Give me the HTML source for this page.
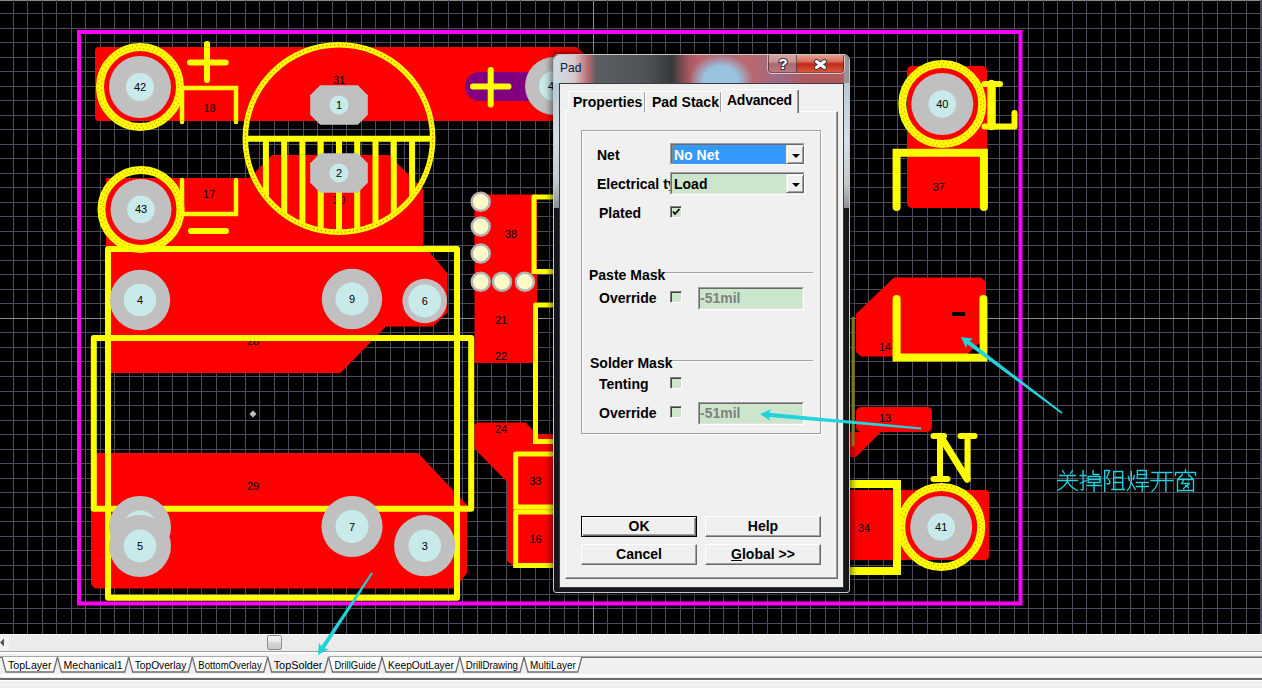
<!DOCTYPE html>
<html><head><meta charset="utf-8"><style>
html,body{margin:0;padding:0;width:1262px;height:688px;overflow:hidden;background:#f0f0f0;font-family:"Liberation Sans",sans-serif;}
svg{position:absolute;left:0;top:0;}

.dlg{position:absolute;left:553px;top:54px;width:297px;height:539px;border-radius:6px 6px 3px 3px;background:#14181c;box-shadow:0 0 7px 2px rgba(0,0,0,.55);box-sizing:border-box;border:1px solid #c8c8c8;overflow:hidden}
.title{position:absolute;left:0;top:0;width:297px;height:28px;
 background:radial-gradient(ellipse 32px 27px at 167px 26px,#98c2e0 0%,#98c2e0 55%,rgba(152,194,224,0) 100%),
 linear-gradient(90deg,#cfdde6 0px,#d7c8cc 20px,#b86a70 34px,#5a5e62 42px,#505458 90px,#36393c 118px,#aa5860 135px,#b8636b 145px,#b86870 200px,#9a6a88 225px,#b05a60 250px,#b05a60 289px,#9a9a9a 291px,#8a8a8a 297px)}
.side{position:absolute;top:28px;width:6px;height:125px;background:linear-gradient(180deg,#b8c8d6,#d4e0ea 45%,#c0c8cc 80%,#8a9096 100%)}
.client{position:absolute;left:5px;top:28px;width:285px;height:505px;background:#f0f0f0;border:1px solid #3c3c3c;box-sizing:border-box}
.tx{position:absolute;font:bold 14px "Liberation Sans",sans-serif;color:#000;white-space:nowrap;line-height:13px}
.tab{position:absolute;background:#f0f0f0;border-left:1px solid #fff;border-top:1px solid #fff;border-right:1px solid #696969;box-shadow:inset -1px 0 0 #a0a0a0;box-sizing:border-box;border-radius:2px 2px 0 0}
.panel{position:absolute;left:565px;top:111px;width:273px;height:468px;border-left:1px solid #fff;border-top:1px solid #fff;border-right:1px solid #696969;border-bottom:1px solid #696969;box-sizing:border-box;box-shadow:inset -1px -1px 0 #a0a0a0}
.grp{position:absolute;left:581px;top:130px;width:240px;height:304px;border:1px solid #a0a0a0;box-shadow:1px 1px 0 #fff, inset 1px 1px 0 #fff;box-sizing:border-box}
.sunk{position:absolute;box-sizing:border-box;border-left:1px solid #a0a0a0;border-top:1px solid #a0a0a0;border-right:1px solid #fff;border-bottom:1px solid #fff}
.sunk2{position:absolute;inset:0;border-left:1px solid #696969;border-top:1px solid #696969;border-right:1px solid #e3e3e3;border-bottom:1px solid #e3e3e3}
.btn{position:absolute;box-sizing:border-box;background:#f0f0f0;border-left:1px solid #fff;border-top:1px solid #fff;border-right:1px solid #696969;border-bottom:1px solid #696969;box-shadow:inset -1px -1px 0 #a0a0a0;text-align:center;font:bold 14px "Liberation Sans",sans-serif;line-height:19px}
.chk{position:absolute;width:12px;height:12px;box-sizing:border-box;background:#cbe6cb;border-left:1px solid #808080;border-top:1px solid #808080;border-right:1px solid #fff;border-bottom:1px solid #fff;box-shadow:inset 1px 1px 0 #404040}
.ddb{position:absolute;box-sizing:border-box;background:#f0f0f0;border-left:1px solid #f0f0f0;border-top:1px solid #f0f0f0;border-right:1px solid #696969;border-bottom:1px solid #696969;box-shadow:inset 1px 1px 0 #fff, inset -1px -1px 0 #a0a0a0}
.tri{position:absolute;left:5px;top:8px;width:0;height:0;border-left:4px solid transparent;border-right:4px solid transparent;border-top:4px solid #000}

</style></head><body>
<svg width="1262" height="688" viewBox="0 0 1262 688" font-family="Liberation Sans, sans-serif"><defs><linearGradient id="thumb" x1="0" y1="0" x2="0" y2="1"><stop offset="0" stop-color="#f4f4f4"/><stop offset="0.45" stop-color="#e8e8e8"/><stop offset="0.5" stop-color="#d6d6da"/><stop offset="1" stop-color="#c8c8cc"/></linearGradient></defs>
<rect x="0" y="0" width="1262" height="634" fill="#000"/>
<rect x="0" y="0" width="1262" height="1" fill="#8a8a8a"/>
<g fill="#4e4c5c" shape-rendering="crispEdges"><rect x="13" y="0" width="1" height="634"/><rect x="27" y="0" width="1" height="634"/><rect x="42" y="0" width="1" height="634"/><rect x="56" y="0" width="1" height="634"/><rect x="71" y="0" width="1" height="634"/><rect x="85" y="0" width="1" height="634"/><rect x="100" y="0" width="1" height="634"/><rect x="114" y="0" width="1" height="634"/><rect x="129" y="0" width="1" height="634"/><rect x="143" y="0" width="1" height="634"/><rect x="158" y="0" width="1" height="634"/><rect x="172" y="0" width="1" height="634"/><rect x="187" y="0" width="1" height="634"/><rect x="201" y="0" width="1" height="634"/><rect x="216" y="0" width="1" height="634"/><rect x="230" y="0" width="1" height="634"/><rect x="245" y="0" width="1" height="634"/><rect x="259" y="0" width="1" height="634"/><rect x="274" y="0" width="1" height="634"/><rect x="288" y="0" width="1" height="634"/><rect x="303" y="0" width="1" height="634"/><rect x="317" y="0" width="1" height="634"/><rect x="332" y="0" width="1" height="634"/><rect x="346" y="0" width="1" height="634"/><rect x="361" y="0" width="1" height="634"/><rect x="375" y="0" width="1" height="634"/><rect x="390" y="0" width="1" height="634"/><rect x="404" y="0" width="1" height="634"/><rect x="419" y="0" width="1" height="634"/><rect x="433" y="0" width="1" height="634"/><rect x="448" y="0" width="1" height="634"/><rect x="462" y="0" width="1" height="634"/><rect x="477" y="0" width="1" height="634"/><rect x="491" y="0" width="1" height="634"/><rect x="506" y="0" width="1" height="634"/><rect x="520" y="0" width="1" height="634"/><rect x="535" y="0" width="1" height="634"/><rect x="549" y="0" width="1" height="634"/><rect x="564" y="0" width="1" height="634"/><rect x="578" y="0" width="1" height="634"/><rect x="593" y="0" width="1" height="634"/><rect x="607" y="0" width="1" height="634"/><rect x="622" y="0" width="1" height="634"/><rect x="636" y="0" width="1" height="634"/><rect x="651" y="0" width="1" height="634"/><rect x="665" y="0" width="1" height="634"/><rect x="680" y="0" width="1" height="634"/><rect x="694" y="0" width="1" height="634"/><rect x="709" y="0" width="1" height="634"/><rect x="723" y="0" width="1" height="634"/><rect x="738" y="0" width="1" height="634"/><rect x="752" y="0" width="1" height="634"/><rect x="767" y="0" width="1" height="634"/><rect x="781" y="0" width="1" height="634"/><rect x="796" y="0" width="1" height="634"/><rect x="810" y="0" width="1" height="634"/><rect x="825" y="0" width="1" height="634"/><rect x="839" y="0" width="1" height="634"/><rect x="854" y="0" width="1" height="634"/><rect x="868" y="0" width="1" height="634"/><rect x="883" y="0" width="1" height="634"/><rect x="897" y="0" width="1" height="634"/><rect x="912" y="0" width="1" height="634"/><rect x="927" y="0" width="1" height="634"/><rect x="941" y="0" width="1" height="634"/><rect x="956" y="0" width="1" height="634"/><rect x="970" y="0" width="1" height="634"/><rect x="985" y="0" width="1" height="634"/><rect x="999" y="0" width="1" height="634"/><rect x="1014" y="0" width="1" height="634"/><rect x="1028" y="0" width="1" height="634"/><rect x="1043" y="0" width="1" height="634"/><rect x="1057" y="0" width="1" height="634"/><rect x="1072" y="0" width="1" height="634"/><rect x="1086" y="0" width="1" height="634"/><rect x="1101" y="0" width="1" height="634"/><rect x="1115" y="0" width="1" height="634"/><rect x="1130" y="0" width="1" height="634"/><rect x="1144" y="0" width="1" height="634"/><rect x="1159" y="0" width="1" height="634"/><rect x="1173" y="0" width="1" height="634"/><rect x="1188" y="0" width="1" height="634"/><rect x="1202" y="0" width="1" height="634"/><rect x="1217" y="0" width="1" height="634"/><rect x="1231" y="0" width="1" height="634"/><rect x="1246" y="0" width="1" height="634"/><rect x="1260" y="0" width="1" height="634"/><rect x="1261" y="0" width="1" height="634"/><rect x="0" y="13" width="1262" height="1"/><rect x="0" y="28" width="1262" height="1"/><rect x="0" y="42" width="1262" height="1"/><rect x="0" y="57" width="1262" height="1"/><rect x="0" y="71" width="1262" height="1"/><rect x="0" y="86" width="1262" height="1"/><rect x="0" y="100" width="1262" height="1"/><rect x="0" y="115" width="1262" height="1"/><rect x="0" y="129" width="1262" height="1"/><rect x="0" y="144" width="1262" height="1"/><rect x="0" y="158" width="1262" height="1"/><rect x="0" y="173" width="1262" height="1"/><rect x="0" y="187" width="1262" height="1"/><rect x="0" y="202" width="1262" height="1"/><rect x="0" y="216" width="1262" height="1"/><rect x="0" y="231" width="1262" height="1"/><rect x="0" y="245" width="1262" height="1"/><rect x="0" y="260" width="1262" height="1"/><rect x="0" y="274" width="1262" height="1"/><rect x="0" y="289" width="1262" height="1"/><rect x="0" y="303" width="1262" height="1"/><rect x="0" y="318" width="1262" height="1"/><rect x="0" y="332" width="1262" height="1"/><rect x="0" y="347" width="1262" height="1"/><rect x="0" y="361" width="1262" height="1"/><rect x="0" y="376" width="1262" height="1"/><rect x="0" y="391" width="1262" height="1"/><rect x="0" y="405" width="1262" height="1"/><rect x="0" y="420" width="1262" height="1"/><rect x="0" y="434" width="1262" height="1"/><rect x="0" y="449" width="1262" height="1"/><rect x="0" y="463" width="1262" height="1"/><rect x="0" y="478" width="1262" height="1"/><rect x="0" y="492" width="1262" height="1"/><rect x="0" y="507" width="1262" height="1"/><rect x="0" y="521" width="1262" height="1"/><rect x="0" y="536" width="1262" height="1"/><rect x="0" y="550" width="1262" height="1"/><rect x="0" y="565" width="1262" height="1"/><rect x="0" y="579" width="1262" height="1"/><rect x="0" y="594" width="1262" height="1"/><rect x="0" y="608" width="1262" height="1"/><rect x="0" y="623" width="1262" height="1"/></g><g fill="#8e8e8e" shape-rendering="crispEdges"><rect x="593" y="1" width="1" height="633"/><rect x="0" y="318" width="1262" height="1"/></g>
<path d="M79,32 H1020.5 V603.5 H79 Z" fill="none" stroke="#ff00ff" stroke-width="4"/><rect x="95" y="47" width="205" height="74" rx="4" fill="#ff0000"/><polygon fill="#ff0000"  points="290,47 576,47 578,48 585,55 585,121 290,121"/><polygon fill="#ff0000"  points="106,178 249.5,178 272,155 389,155 423.5,189.5 423.5,250 106,250"/><rect x="106" y="178" width="54" height="62" rx="5" fill="#ff0000"/><polygon fill="#ff0000"  points="106,249 427,249 447.5,273.5 447.5,312.5 433,326.5 386,326.5 340.5,373 106,373"/><polygon fill="#ff0000"  points="93,453 418,453 467,505 467,573 455,588.5 95,588.5 91,584.5 91,455"/><polygon fill="#ff0000"  points="474.5,194.5 537,194.5 537,363 474.5,363"/><polygon fill="#ff0000"  points="477,422.4 525.6,422.4 537,434.5 560,434.5 560,566.4 514.5,566.4 507,561 507,481.8 474.4,448.4 474.4,425"/><rect x="907" y="66" width="80" height="142" rx="5" fill="#ff0000"/><polygon fill="#ff0000"  points="894,277.5 981,277.5 986,282 986,352 981,356.5 861,356.5 856,352 856,314"/><rect x="856" y="407" width="76" height="25" rx="5" fill="#ff0000"/><polygon fill="#ff0000"  points="840,432 881,432 856,457 840,457"/><rect x="845" y="490" width="144" height="70" rx="4" fill="#ff0000"/><rect x="465" y="72" width="100" height="29" rx="14.5" fill="#800080"/><text x="209.5" y="112.3" font-size="11" text-anchor="middle" fill="#000">18</text><text x="209.2" y="198.2" font-size="11" text-anchor="middle" fill="#000">17</text><text x="339" y="83.6" font-size="11" text-anchor="middle" fill="#000">31</text><text x="339" y="203.5" font-size="11" text-anchor="middle" fill="#000">30</text><text x="253" y="344.7" font-size="11" text-anchor="middle" fill="#000">28</text><text x="253" y="490" font-size="11" text-anchor="middle" fill="#000">29</text><text x="511" y="238" font-size="11" text-anchor="middle" fill="#000">38</text><text x="501" y="324" font-size="11" text-anchor="middle" fill="#000">21</text><text x="501" y="360" font-size="11" text-anchor="middle" fill="#000">22</text><text x="501" y="433.3" font-size="11" text-anchor="middle" fill="#000">24</text><text x="535.5" y="484.5" font-size="11" text-anchor="middle" fill="#000">33</text><text x="535.5" y="542.7" font-size="11" text-anchor="middle" fill="#000">16</text><text x="938.8" y="191" font-size="11" text-anchor="middle" fill="#000">37</text><text x="885" y="351" font-size="11" text-anchor="middle" fill="#000">14</text><text x="885" y="422.4" font-size="11" text-anchor="middle" fill="#000">13</text><text x="864" y="532" font-size="11" text-anchor="middle" fill="#000">34</text><rect x="250.5" y="411.5" width="5" height="5" transform="rotate(45 253 414)" fill="#c0c0c0"/><circle cx="140" cy="87" r="40" fill="none" stroke="#ffff00" stroke-width="8"/><circle cx="140" cy="87" r="38.5" fill="none" stroke="#ff0000" stroke-width="0.9" stroke-dasharray="0.9 3.6" opacity="0.8"/><circle cx="140" cy="87" r="41.5" fill="none" stroke="#ff0000" stroke-width="0.9" stroke-dasharray="0.9 3.6" stroke-dashoffset="2" opacity="0.8"/><circle cx="141" cy="209.4" r="39.5" fill="none" stroke="#ffff00" stroke-width="8"/><circle cx="141" cy="209.4" r="38.0" fill="none" stroke="#ff0000" stroke-width="0.9" stroke-dasharray="0.9 3.6" opacity="0.8"/><circle cx="141" cy="209.4" r="41.0" fill="none" stroke="#ff0000" stroke-width="0.9" stroke-dasharray="0.9 3.6" stroke-dashoffset="2" opacity="0.8"/><circle cx="942.3" cy="104" r="40" fill="none" stroke="#ffff00" stroke-width="8"/><circle cx="942.3" cy="104" r="38.5" fill="none" stroke="#ff0000" stroke-width="0.9" stroke-dasharray="0.9 3.6" opacity="0.8"/><circle cx="942.3" cy="104" r="41.5" fill="none" stroke="#ff0000" stroke-width="0.9" stroke-dasharray="0.9 3.6" stroke-dashoffset="2" opacity="0.8"/><circle cx="941.2" cy="527" r="40" fill="none" stroke="#ffff00" stroke-width="8"/><circle cx="941.2" cy="527" r="38.5" fill="none" stroke="#ff0000" stroke-width="0.9" stroke-dasharray="0.9 3.6" opacity="0.8"/><circle cx="941.2" cy="527" r="41.5" fill="none" stroke="#ff0000" stroke-width="0.9" stroke-dasharray="0.9 3.6" stroke-dashoffset="2" opacity="0.8"/><path d="M207,44 V80 M190,62.4 H225.7" fill="none" stroke="#ffff00" stroke-width="6" stroke-linecap="round" stroke-linejoin="round"/><path d="M182,122 V88 H236 V122" fill="none" stroke="#ffff00" stroke-width="4.5" stroke-linecap="round" stroke-linejoin="miter"/><path d="M182,180 V214 H236 V180" fill="none" stroke="#ffff00" stroke-width="4.5" stroke-linecap="round" stroke-linejoin="miter"/><path d="M191,231 H226" fill="none" stroke="#ffff00" stroke-width="6" stroke-linecap="round" stroke-linejoin="round"/><path d="M473,86.5 H508.5 M490.7,70 V104.5" fill="none" stroke="#ffff00" stroke-width="6" stroke-linecap="round" stroke-linejoin="round"/><clipPath id="cc"><circle cx="339" cy="138.5" r="95"/></clipPath><g clip-path="url(#cc)"><path d="M265.9,139 V240 M284.2,139 V240 M302.4,139 V240 M320.7,139 V240 M339.0,139 V240 M357.2,139 V240 M375.5,139 V240 M393.8,139 V240 M412.1,139 V240  M240,138.8 H440" fill="none" stroke="#ffff00" stroke-width="6" stroke-linecap="round" stroke-linejoin="round"/></g><circle cx="339" cy="138.5" r="93.7" fill="none" stroke="#ffff00" stroke-width="5.5"/><circle cx="339" cy="138.5" r="93.7" fill="none" stroke="#ff0000" stroke-width="1" stroke-dasharray="1 3"/><path d="M108,249 H457 V597.8 H108 Z" fill="none" stroke="#ffff00" stroke-width="6" stroke-linecap="round" stroke-linejoin="round"/><path d="M93.8,338 H471.2 V508.7 H93.8 Z" fill="none" stroke="#ffff00" stroke-width="6" stroke-linecap="round" stroke-linejoin="round"/><path d="M534,197 H552 M534,197 V271.5 H552" fill="none" stroke="#ffff00" stroke-width="5" stroke-linecap="round" stroke-linejoin="miter"/><path d="M535.5,305 H552 M535.5,305 V441.5 H552" fill="none" stroke="#ffff00" stroke-width="5" stroke-linecap="round" stroke-linejoin="miter"/><path d="M515.7,454 H552 M515.7,454 V507 H552" fill="none" stroke="#ffff00" stroke-width="5" stroke-linecap="round" stroke-linejoin="miter"/><path d="M515.7,512 H552 M515.7,512 V565.5 H552" fill="none" stroke="#ffff00" stroke-width="5" stroke-linecap="round" stroke-linejoin="miter"/><path d="M896.6,207 V152.8 H983.9 V207" fill="none" stroke="#ffff00" stroke-width="8" stroke-linecap="round" stroke-linejoin="miter"/><path d="M896.6,299 V357.6 H983.4 V299" fill="none" stroke="#ffff00" stroke-width="8" stroke-linecap="round" stroke-linejoin="miter"/><path d="M850,484 H897 V571 H850" fill="none" stroke="#ffff00" stroke-width="8" stroke-linecap="round" stroke-linejoin="miter"/><rect x="952" y="312" width="13" height="4" fill="#000"/><path d="M853,318 V445" fill="none" stroke="#9a9a18" stroke-width="3" stroke-linecap="round" stroke-linejoin="round"/><polygon points="968,353.5 979.5,353.5 979.5,343" fill="#000"/><path d="M933.5,436 H944 M940,436 V479 M933.5,479 H947.5 M960.5,436 H974.5 M967.5,436 V479.5" fill="none" stroke="#ffff00" stroke-width="6" stroke-linecap="round" stroke-linejoin="round"/><path d="M941,437 L967,479" fill="none" stroke="#ffff00" stroke-width="7" stroke-linecap="round" stroke-linejoin="round"/><path d="M984.5,84 H1000" fill="none" stroke="#ffff00" stroke-width="6" stroke-linecap="round" stroke-linejoin="round"/><path d="M991.5,84 V126" fill="none" stroke="#ffff00" stroke-width="8.5" stroke-linecap="round" stroke-linejoin="round"/><path d="M984.5,126.5 H1014.5 V113" fill="none" stroke="#ffff00" stroke-width="6" stroke-linecap="round" stroke-linejoin="round"/><polygon fill="#c0c0c0" points="320.2,85.2 357.8,85.2 367.8,95.2 367.8,114.8 357.8,124.8 320.2,124.8 310.2,114.8 310.2,95.2"/><circle cx="339" cy="105" r="9.6" fill="#c8eaea"/><text x="339" y="109" font-size="11" text-anchor="middle" fill="#000">1</text><polygon fill="#c0c0c0" points="320.2,153.2 357.8,153.2 367.8,163.2 367.8,182.8 357.8,192.8 320.2,192.8 310.2,182.8 310.2,163.2"/><circle cx="339" cy="173" r="9.6" fill="#c8eaea"/><text x="339" y="177" font-size="11" text-anchor="middle" fill="#000">2</text><circle cx="140" cy="87" r="31" fill="#c0c0c0"/><circle cx="140" cy="87" r="14" fill="#c8eaea"/><text x="140" y="91" font-size="11" text-anchor="middle" fill="#000">42</text><circle cx="141" cy="209.4" r="30.5" fill="#c0c0c0"/><circle cx="141" cy="209.4" r="13.8" fill="#c8eaea"/><text x="141" y="213.4" font-size="11" text-anchor="middle" fill="#000">43</text><circle cx="140" cy="300" r="30.2" fill="#c0c0c0"/><circle cx="140" cy="300" r="16.3" fill="#c8eaea"/><text x="140" y="304" font-size="11" text-anchor="middle" fill="#000">4</text><circle cx="352" cy="299" r="30.2" fill="#c0c0c0"/><circle cx="352" cy="299" r="16.6" fill="#c8eaea"/><text x="352" y="303" font-size="11" text-anchor="middle" fill="#000">9</text><circle cx="424.7" cy="301" r="22.3" fill="#c0c0c0"/><circle cx="424.7" cy="301" r="16.4" fill="#c8eaea"/><text x="424.7" y="305" font-size="11" text-anchor="middle" fill="#000">6</text><circle cx="140" cy="527" r="31" fill="#c0c0c0"/><circle cx="140" cy="527" r="16.5" fill="#c8eaea"/><circle cx="140" cy="546" r="31" fill="#c0c0c0"/><circle cx="140" cy="546" r="16.4" fill="#c8eaea"/><text x="140" y="550" font-size="11" text-anchor="middle" fill="#000">5</text><circle cx="352" cy="526.5" r="30.6" fill="#c0c0c0"/><circle cx="352" cy="526.5" r="16.5" fill="#c8eaea"/><text x="352" y="530.5" font-size="11" text-anchor="middle" fill="#000">7</text><circle cx="424.7" cy="545.7" r="30.6" fill="#c0c0c0"/><circle cx="424.7" cy="545.7" r="16.3" fill="#c8eaea"/><text x="424.7" y="549.7" font-size="11" text-anchor="middle" fill="#000">3</text><circle cx="554" cy="86" r="29" fill="#c0c0c0"/><circle cx="554" cy="86" r="15" fill="#c8eaea"/><text x="554" y="90" font-size="11" text-anchor="middle" fill="#000">44</text><circle cx="942.3" cy="104" r="31" fill="#c0c0c0"/><circle cx="942.3" cy="104" r="13.8" fill="#c8eaea"/><text x="942.3" y="108" font-size="11" text-anchor="middle" fill="#000">40</text><circle cx="941.2" cy="527" r="31" fill="#c0c0c0"/><circle cx="941.2" cy="527" r="13.8" fill="#c8eaea"/><text x="941.2" y="531" font-size="11" text-anchor="middle" fill="#000">41</text><circle cx="480.7" cy="201.8" r="9" fill="#fff8c8" stroke="#b4b4b4" stroke-width="2.5"/><circle cx="480.7" cy="226.5" r="9" fill="#fff8c8" stroke="#b4b4b4" stroke-width="2.5"/><circle cx="480.7" cy="253.5" r="9" fill="#fff8c8" stroke="#b4b4b4" stroke-width="2.5"/><circle cx="480.7" cy="281.7" r="9" fill="#fff8c8" stroke="#b4b4b4" stroke-width="2.5"/><circle cx="502" cy="281.7" r="9" fill="#fff8c8" stroke="#b4b4b4" stroke-width="2.5"/><circle cx="524.9" cy="281.7" r="9" fill="#fff8c8" stroke="#b4b4b4" stroke-width="2.5"/>
<path transform="translate(1055.5,469.5) scale(1.0)" d="M7,1 L9,4 M17,1 L15,4 M4,6 H20 M2,11 H22 M12,6 V11 M12,11 Q10,17 2,21 M12,12 Q15,18 22,21" fill="none" stroke="#22d3dc" stroke-width="1.35" stroke-linecap="round" stroke-linejoin="round"/><path transform="translate(1079.1,469.5) scale(1.0)" d="M1,6 H7 M4,1 V20 Q4,21 2,20 M1,14 L7,11 M14,1 V5 H20 M9,7 H21 V13 H9 Z M9,10 H21 M8,16 H22 M15,13 V22" fill="none" stroke="#22d3dc" stroke-width="1.35" stroke-linecap="round" stroke-linejoin="round"/><path transform="translate(1102.7,469.5) scale(1.0)" d="M2,1 V22 M2,1 H7 Q5,6 4,8 Q8,11 7,14 Q6,15 4,14 M11,2 H20 V19 M11,2 V19 M11,8 H20 M11,13 H20 M9,20 H22" fill="none" stroke="#22d3dc" stroke-width="1.35" stroke-linecap="round" stroke-linejoin="round"/><path transform="translate(1126.3,469.5) scale(1.0)" d="M2,7 L3,11 M8,6 L7,10 M5,2 V12 Q4,18 1,21 M5,13 L9,20 M11,1 H20 V9 H11 Z M11,5 H20 M10,13 H22 M10,17 H22 M16,13 V22" fill="none" stroke="#22d3dc" stroke-width="1.35" stroke-linecap="round" stroke-linejoin="round"/><path transform="translate(1149.9,469.5) scale(1.0)" d="M2,3 H22 M1,11 H23 M8,3 V12 Q7,18 2,22 M16,3 V22" fill="none" stroke="#22d3dc" stroke-width="1.35" stroke-linecap="round" stroke-linejoin="round"/><path transform="translate(1173.5,469.5) scale(1.0)" d="M12,0 V2 M2,6 V3 H22 V6 M9,5 L5,9 M15,5 L19,9 M4,10 H20 V22 M4,10 V22 M4,21 H20 M10,11 L8,14 M8,14 H16 L10,19 M12,16 L15,18" fill="none" stroke="#22d3dc" stroke-width="1.35" stroke-linecap="round" stroke-linejoin="round"/><polygon fill="#22d3dc" points="1062.5,412.3 969.5,340.7 973.4,338.8 961.0,337.0 966.2,348.4 966.9,344.1 1061.5,413.7"/>
<rect x="0" y="634" width="1262" height="54" fill="#f0f0f0"/><rect x="0" y="634" width="1262" height="1" fill="#ffffff"/><rect x="0" y="635" width="1262" height="16" fill="#ebebeb"/><rect x="0" y="636" width="9" height="14" fill="#f2f2f2"/><polygon points="0,642.5 4,638.5 4,646.5" fill="#555"/><rect x="267.5" y="635.5" width="14" height="14" rx="2" fill="url(#thumb)" stroke="#8c8c8c"/><rect x="0" y="651" width="1262" height="1" fill="#a0a0a0"/><rect x="0" y="652" width="1262" height="2" fill="#ffffff"/><rect x="0" y="656" width="1262" height="1" fill="#a8a8a8"/><rect x="0" y="657" width="1262" height="1" fill="#6d6d6d"/><rect x="0" y="674" width="1262" height="3" fill="#ffffff"/><rect x="0" y="678" width="1262" height="2" fill="#6d6d6d"/><rect x="0" y="680" width="1262" height="1" fill="#ffffff"/><rect x="0" y="658" width="1262" height="15" fill="#f0f0f0"/><polygon points="2,657 57.5,657 53.5,672 6,672" fill="#ffffff"/><polyline points="2,657 6,672 53.5,672 57.5,657" fill="none" stroke="#6d6d6d" stroke-width="1.3"/><text x="29.75" y="668.5" font-size="11" text-anchor="middle" fill="#000" textLength="43.5" lengthAdjust="spacingAndGlyphs">TopLayer</text><polygon points="57.5,657 128.7,657 124.69999999999999,672 61.5,672" fill="#ffffff"/><polyline points="57.5,657 61.5,672 124.69999999999999,672 128.7,657" fill="none" stroke="#6d6d6d" stroke-width="1.3"/><text x="93.1" y="668.5" font-size="11" text-anchor="middle" fill="#000" textLength="59.19999999999999" lengthAdjust="spacingAndGlyphs">Mechanical1</text><polygon points="128.7,657 192.3,657 188.3,672 132.7,672" fill="#ffffff"/><polyline points="128.7,657 132.7,672 188.3,672 192.3,657" fill="none" stroke="#6d6d6d" stroke-width="1.3"/><text x="160.5" y="668.5" font-size="11" text-anchor="middle" fill="#000" textLength="51.60000000000002" lengthAdjust="spacingAndGlyphs">TopOverlay</text><polygon points="192.3,657 267.7,657 263.7,672 196.3,672" fill="#ffffff"/><polyline points="192.3,657 196.3,672 263.7,672 267.7,657" fill="none" stroke="#6d6d6d" stroke-width="1.3"/><text x="230.0" y="668.5" font-size="11" text-anchor="middle" fill="#000" textLength="63.39999999999998" lengthAdjust="spacingAndGlyphs">BottomOverlay</text><polygon points="267.7,657 328.5,657 324.5,672 271.7,672" fill="#f0f0f0"/><rect x="267.7" y="656" width="60.80000000000001" height="2" fill="#f0f0f0"/><polyline points="267.7,657 271.7,672 324.5,672 328.5,657" fill="none" stroke="#6d6d6d" stroke-width="1.3"/><text x="298.1" y="668.5" font-size="11" text-anchor="middle" fill="#000" textLength="48.80000000000001" lengthAdjust="spacingAndGlyphs">TopSolder</text><polygon points="328.5,657 382,657 378,672 332.5,672" fill="#ffffff"/><polyline points="328.5,657 332.5,672 378,672 382,657" fill="none" stroke="#6d6d6d" stroke-width="1.3"/><text x="355.25" y="668.5" font-size="11" text-anchor="middle" fill="#000" textLength="41.5" lengthAdjust="spacingAndGlyphs">DrillGuide</text><polygon points="382,657 459.8,657 455.8,672 386,672" fill="#ffffff"/><polyline points="382,657 386,672 455.8,672 459.8,657" fill="none" stroke="#6d6d6d" stroke-width="1.3"/><text x="420.9" y="668.5" font-size="11" text-anchor="middle" fill="#000" textLength="65.80000000000001" lengthAdjust="spacingAndGlyphs">KeepOutLayer</text><polygon points="459.8,657 524,657 520,672 463.8,672" fill="#ffffff"/><polyline points="459.8,657 463.8,672 520,672 524,657" fill="none" stroke="#6d6d6d" stroke-width="1.3"/><text x="491.9" y="668.5" font-size="11" text-anchor="middle" fill="#000" textLength="52.19999999999999" lengthAdjust="spacingAndGlyphs">DrillDrawing</text><polygon points="524,657 581.8,657 577.8,672 528,672" fill="#ffffff"/><polyline points="524,657 528,672 577.8,672 581.8,657" fill="none" stroke="#6d6d6d" stroke-width="1.3"/><text x="552.9" y="668.5" font-size="11" text-anchor="middle" fill="#000" textLength="45.799999999999955" lengthAdjust="spacingAndGlyphs">MultiLayer</text>
</svg>

<div class="dlg">
 <div class="title"></div>
 <div class="side" style="left:0"></div>
 <div class="side" style="left:290px"></div>
 <div style="position:absolute;left:6px;top:6px;font:12px 'Liberation Sans',sans-serif;color:#0a1a3a">Pad</div>
 <div style="position:absolute;left:214px;top:-1px;width:29px;height:19px;border:1px solid rgba(60,30,30,.6);border-top:none;border-radius:0 0 0 4px;box-shadow:0 1px 0 rgba(255,255,255,.6),-1px 0 0 rgba(255,255,255,.5);background:linear-gradient(180deg,#d8a8a8 0%,#c89090 45%,#a86870 55%,#b87a80 100%);box-sizing:border-box"></div>
 <div style="position:absolute;left:243px;top:-1px;width:47px;height:19px;border:1px solid rgba(60,30,30,.6);border-top:none;border-left:none;border-radius:0 0 4px 0;box-shadow:0 1px 0 rgba(255,255,255,.6),1px 0 0 rgba(255,255,255,.5);background:linear-gradient(180deg,#e8a898 0%,#d87060 40%,#c02818 55%,#d85838 100%);box-sizing:border-box"></div>
 <svg style="position:absolute;left:221px;top:0px" width="16" height="17"><text x="8" y="14" text-anchor="middle" font-family="Liberation Sans" font-weight="bold" font-size="15" fill="#fff" stroke="#3a3a4a" stroke-width="2.2" paint-order="stroke">?</text></svg>
 <svg style="position:absolute;left:259px;top:4px" width="15" height="11"><path d="M3.5,2.5 L11.5,8.5 M11.5,2.5 L3.5,8.5" stroke="#3a3a4a" stroke-width="5" stroke-linecap="round"/><path d="M3.5,2.5 L11.5,8.5 M11.5,2.5 L3.5,8.5" stroke="#fff" stroke-width="3" stroke-linecap="round"/></svg>
 <div class="client"></div>
</div>
<div class="panel"></div>
<div class="tab" style="left:568px;top:91px;width:78px;height:21px"></div>
<div class="tab" style="left:645px;top:91px;width:77px;height:21px"></div>
<div class="tab" style="left:721px;top:89px;width:78px;height:24px;border-bottom:none"></div>
<div class="tx" style="left:573px;top:96px">Properties</div>
<div class="tx" style="left:652px;top:96px">Pad Stack</div>
<div class="tx" style="left:727px;top:94px;letter-spacing:-0.25px">Advanced</div>
<div class="grp"></div>
<div class="tx" style="left:597px;top:149px">Net</div>
<div class="tx" style="left:597px;top:178px;width:73px;overflow:hidden">Electrical type</div>
<div class="tx" style="left:599px;top:207px">Plated</div>
<div class="sunk" style="left:670px;top:143px;width:135px;height:22px"><div class="sunk2"></div></div>
<div style="position:absolute;left:672px;top:145px;width:114px;height:19px;background:#3399ff;box-sizing:border-box;border:1px dotted #c08040"></div>
<div class="tx" style="left:674px;top:149px;color:#fff">No Net</div>
<div class="ddb" style="left:786px;top:145px;width:18px;height:19px"><div class="tri"></div></div>
<div class="sunk" style="left:670px;top:172px;width:135px;height:23px"><div class="sunk2"></div></div>
<div style="position:absolute;left:672px;top:174px;width:114px;height:19px;background:#cce6cc"></div>
<div class="tx" style="left:674px;top:178px">Load</div>
<div class="ddb" style="left:786px;top:174px;width:18px;height:19px"><div class="tri"></div></div>
<div class="chk" style="left:670px;top:206px"></div>
<svg style="position:absolute;left:670px;top:206px" width="12" height="12"><path d="M3,5.5 L5,8 L9.5,3" fill="none" stroke="#000" stroke-width="1.7"/></svg>
<div style="position:absolute;left:652px;top:272px;width:161px;height:1px;background:#a0a0a0;box-shadow:0 1px 0 #fff"></div>
<div class="tx" style="left:589px;top:269px">Paste Mask</div>
<div class="tx" style="left:599px;top:292px">Override</div>
<div class="chk" style="left:670px;top:291px"></div>
<div class="sunk" style="left:698px;top:287px;width:106px;height:23px"><div class="sunk2"></div><div style="position:absolute;left:1px;top:1px;right:1px;bottom:1px;background:#cce6cc"></div></div>
<div class="tx" style="left:700px;top:292px;color:#808080">-51mil</div>
<div style="position:absolute;left:665px;top:360px;width:148px;height:1px;background:#a0a0a0;box-shadow:0 1px 0 #fff"></div>
<div class="tx" style="left:590px;top:357px">Solder Mask</div>
<div class="tx" style="left:599px;top:378px">Tenting</div>
<div class="chk" style="left:670px;top:377px"></div>
<div class="tx" style="left:599px;top:407px">Override</div>
<div class="chk" style="left:670px;top:406px"></div>
<div class="sunk" style="left:698px;top:402px;width:106px;height:23px"><div class="sunk2"></div><div style="position:absolute;left:1px;top:1px;right:1px;bottom:1px;background:#cce6cc"></div></div>
<div class="tx" style="left:700px;top:407px;color:#808080">-51mil</div>
<div class="btn" style="left:581px;top:516px;width:116px;height:21px;border:1px solid #000;box-shadow:inset 1px 1px 0 #fff,inset -1px -1px 0 #696969,inset -2px -2px 0 #a0a0a0">OK</div>
<div class="btn" style="left:705px;top:516px;width:116px;height:21px">Help</div>
<div class="btn" style="left:581px;top:544px;width:116px;height:21px">Cancel</div>
<div class="btn" style="left:705px;top:544px;width:116px;height:21px"><u>G</u>lobal &gt;&gt;</div>

<svg width="1262" height="688" style="position:absolute;left:0;top:0"><polygon fill="#22d3dc" points="921.1,427.6 769.2,412.7 771.5,409.0 760.0,414.0 770.4,421.0 768.8,416.9 920.9,429.4"/><polygon fill="#22d3dc" points="371.2,572.5 321.2,646.3 319.0,642.5 318.0,655.0 329.1,649.1 324.7,648.6 372.8,573.5"/></svg>
</body></html>
